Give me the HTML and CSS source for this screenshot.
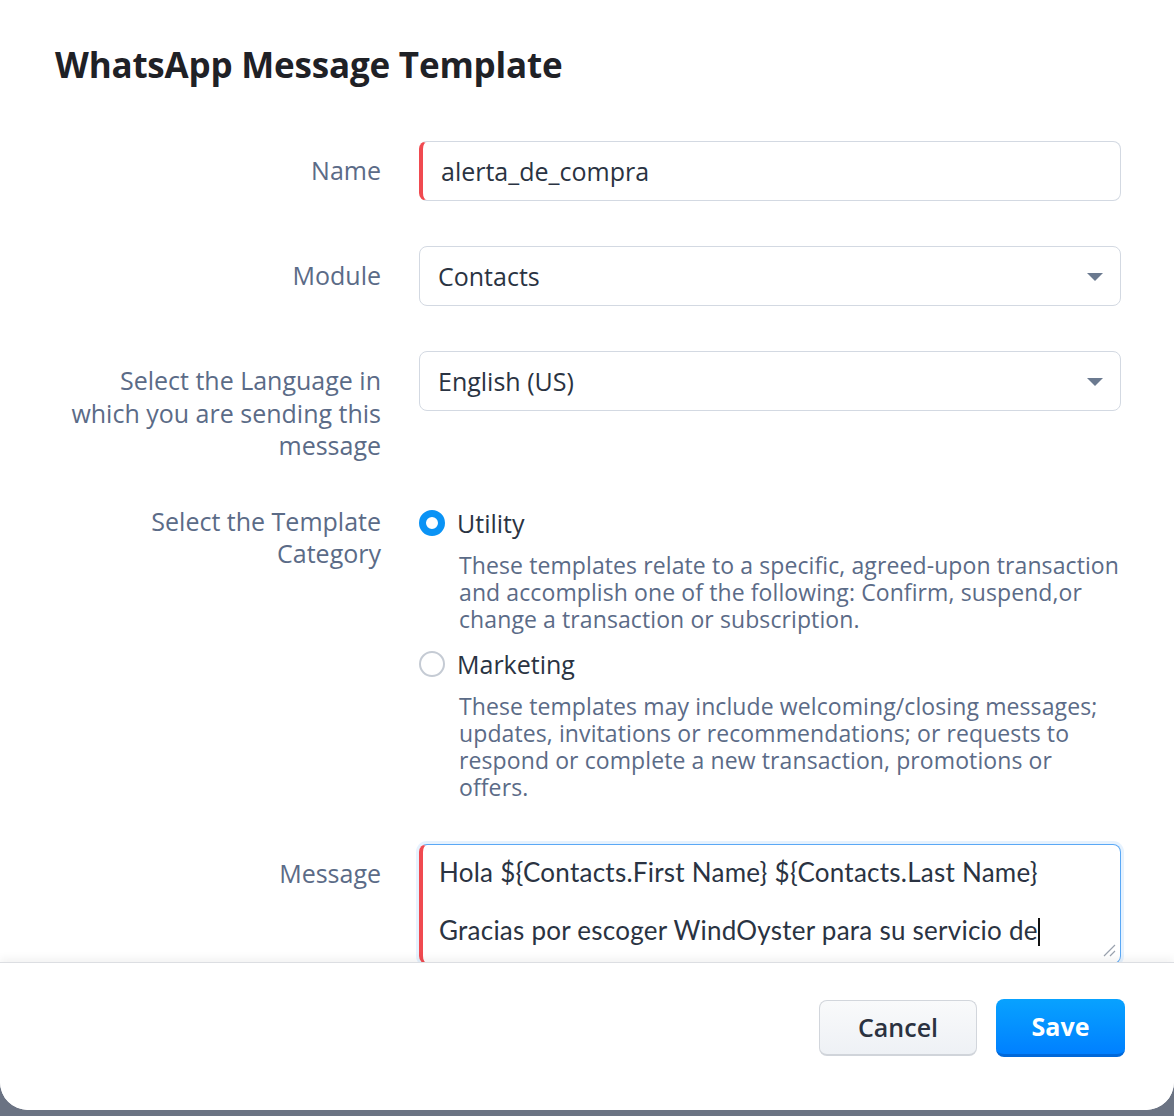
FILE: index.html
```html
<!DOCTYPE html>
<html lang="en">
<head>
<meta charset="utf-8">
<title>WhatsApp Message Template</title>
<link rel="stylesheet" href="styles.css">
</head>
<body>
<div class="modal">
  <div class="modal-body">
    <h1 class="title">WhatsApp Message Template</h1>
    <div class="form">
      <div class="row">
        <div class="label">Name</div>
        <div class="field input required">alerta_de_compra</div>
      </div>
      <div class="row">
        <div class="label">Module</div>
        <div class="field input select">Contacts
          <span class="caret-down"></span>
        </div>
      </div>
      <div class="row row-tight">
        <div class="label">Select the Language in which you are sending this message</div>
        <div class="field input select">English (US)
          <span class="caret-down"></span>
        </div>
      </div>
      <div class="row row-category">
        <div class="label">Select the Template Category</div>
        <div class="field options">
          <div class="option">
            <div class="option-head"><span class="radio checked"></span><span class="option-name">Utility</span></div>
            <div class="option-desc">These templates relate to a specific, agreed-upon transaction and accomplish one of the following: Confirm, suspend,or change a transaction or subscription.</div>
          </div>
          <div class="option">
            <div class="option-head"><span class="radio"></span><span class="option-name">Marketing</span></div>
            <div class="option-desc">These templates may include welcoming/closing messages; updates, invitations or recommendations; or requests to respond or complete a new transaction, promotions or offers.</div>
          </div>
        </div>
      </div>
      <div class="row">
        <div class="label">Message</div>
        <div class="field textarea required">
          <div class="ta-line">Hola ${Contacts.First Name} ${Contacts.Last Name}</div>
          <div class="ta-line">&nbsp;</div>
          <div class="ta-line">Gracias por escoger WindOyster para su servicio de<span class="text-caret"></span></div>
          <svg class="resize" width="16" height="16" viewBox="0 0 16 16"><path d="M15 4 L4 15 M15 10 L10 15" stroke="#9aa2ae" stroke-width="1.2" fill="none"/></svg>
        </div>
      </div>
    </div>
  </div>
  <div class="modal-footer">
    <button class="btn btn-cancel">Cancel</button>
    <button class="btn btn-save">Save</button>
  </div>
</div>
</body>
</html>
```

FILE: styles.css
```css
html, body {
  margin: 0;
  padding: 0;
}
body {
  background: #6b7383;
  width: 1174px;
  height: 1116px;
  overflow: hidden;
  font-family: "Open Sans", "Noto Sans", sans-serif;
}
.modal {
  background: #fff;
  height: 1110px;
  border-radius: 0 0 28px 28px;
  display: flex;
  flex-direction: column;
  overflow: hidden;
}
.modal-body {
  flex: 1;
  overflow: hidden;
  padding: 0 53px 0 55px;
}
.title {
  margin: 42px 0 0 0;
  font-size: 35px;
  line-height: 46px;
  font-weight: 700;
  color: #1f2126;
  letter-spacing: -0.2px;
}
.form {
  margin-top: 53px;
}
.row {
  display: grid;
  grid-template-columns: 326px 702px;
  column-gap: 38px;
  margin-bottom: 45px;
}
.row-tight {
  margin-bottom: 30px;
}
.row-category {
  margin-bottom: 41px;
}
.label {
  text-align: right;
  font-size: 25px;
  line-height: 32.5px;
  color: #5b6b87;
  padding-top: 13px;
}
.field {
  position: relative;
  box-sizing: border-box;
}
.input {
  height: 60px;
  border: 1px solid #d3d9e2;
  border-radius: 8px;
  padding: 0 18px;
  display: flex;
  align-items: center;
  font-size: 25px;
  color: #2a3342;
}
.required {
  border-left: 4px solid #f04a50;
  padding-left: 18px;
}
.caret-down {
  position: absolute;
  right: 17px;
  top: 26px;
  width: 0;
  height: 0;
  border-left: 8px solid transparent;
  border-right: 8px solid transparent;
  border-top: 8px solid #6b7a90;
}
.options {
  padding-top: 2px;
}
.option {
  margin-bottom: 2px;
}
.option-head {
  display: flex;
  align-items: center;
  height: 58px;
  gap: 12px;
}
.radio {
  width: 26px;
  height: 26px;
  box-sizing: border-box;
  border-radius: 50%;
  border: 2.5px solid #c5cbd4;
  background: #fff;
  flex: none;
}
.radio.checked {
  border: 7px solid #0a93f5;
}
.option-name {
  font-size: 25px;
  color: #2a3342;
}
.option-desc {
  padding-left: 40px;
  font-size: 23px;
  line-height: 27px;
  letter-spacing: 0.1px;
  color: #5b6b87;
}
.textarea {
  height: 120px;
  border: 1px solid #5aa8f5;
  border-left: 4px solid #f04a50;
  border-radius: 8px;
  box-shadow: 0 0 0 3px rgba(90, 168, 245, 0.15);
  padding: 13px 16px;
  font-family: "Lato", "Open Sans", sans-serif;
  font-size: 26px;
  line-height: 29px;
  letter-spacing: 0.25px;
  color: #2a3342;
}
.ta-line {
  white-space: nowrap;
}
.text-caret {
  display: inline-block;
  width: 2px;
  height: 28px;
  background: #111;
  vertical-align: -6px;
}
.resize {
  position: absolute;
  right: 4px;
  bottom: 6px;
}
.modal-footer {
  flex: none;
  height: 148px;
  border-top: 1px solid #dcdee2;
  box-shadow: 0 -4px 8px rgba(0, 0, 0, 0.05);
  position: relative;
  background: #fff;
  display: flex;
  justify-content: flex-end;
  align-items: flex-start;
  gap: 19px;
  padding: 36px 49px 0 0;
  box-sizing: border-box;
}
.btn {
  font-family: "Open Sans", "Noto Sans", sans-serif;
  font-size: 25px;
  border-radius: 8px;
  cursor: pointer;
  padding: 0;
  line-height: 1;
}
.btn-cancel {
  width: 158px;
  height: 56px;
  margin-top: 1px;
  background: linear-gradient(#f9fafb, #eef1f5);
  border: 1px solid #d2d6dc;
  border-bottom: 2px solid #d0d4da;
  color: #2b3240;
  font-weight: 600;
}
.btn-save {
  width: 129px;
  height: 58px;
  background: linear-gradient(#08a2ff, #0080ff);
  border: none;
  border-bottom: 3px solid #0068d9;
  color: #fff;
  font-weight: 700;
}
```
